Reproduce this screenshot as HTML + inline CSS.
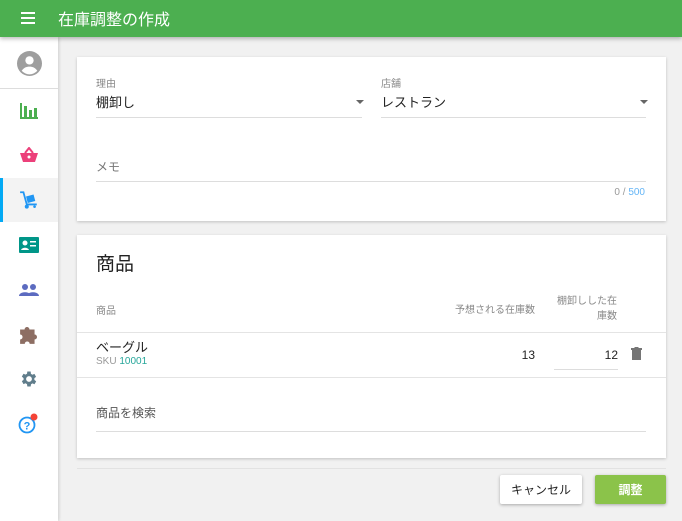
<!DOCTYPE html>
<html><head><meta charset="utf-8"><style>
*{box-sizing:border-box;margin:0;padding:0}
body{width:682px;height:521px;overflow:hidden;background:#f1f1f1;font-family:"Liberation Sans","Noto Sans CJK JP",sans-serif;position:relative;color:#222}
.top{position:absolute;left:0;top:0;width:682px;height:37px;background:#4caf50;box-shadow:0 2px 4px rgba(0,0,0,.25);z-index:3}
.top .t{position:absolute;left:58px;top:6px;color:#fff;font-size:16px}
.side{position:absolute;left:0;top:37px;width:58px;height:484px;background:#fff;box-shadow:1px 0 3px rgba(0,0,0,.15);z-index:2}
.side .it{position:absolute;left:0;width:58px;height:44px;display:flex;align-items:center;justify-content:center}
.card{position:absolute;left:77px;width:589px;background:#fff;box-shadow:0 1px 3px rgba(0,0,0,.2)}
.lbl{position:absolute;font-size:10px;color:#888}
.val{position:absolute;font-size:13px;color:#222}
.ln{position:absolute;height:1px;background:#ddd}
.arr{position:absolute;width:0;height:0;border-left:4px solid transparent;border-right:4px solid transparent;border-top:4px solid #666}
.btn{position:absolute;top:475px;height:29px;font-size:12px;display:flex;align-items:center;justify-content:center;box-shadow:0 1px 3px rgba(0,0,0,.3);border-radius:2px}
</style></head><body>
<div class="top">
<svg style="position:absolute;left:21px;top:12px" width="14" height="12"><rect y="0" width="14" height="2" fill="#fff"/><rect y="5" width="14" height="2" fill="#fff"/><rect y="10" width="14" height="2" fill="#fff"/></svg>
<div class="t">在庫調整の作成</div></div>
<div class="side">
<div class="it" style="top:3px;height:46px"><svg width="25" height="25" viewBox="0 0 24 24"><circle cx="12" cy="12" r="12" fill="#9e9e9e"/><circle cx="12" cy="9" r="4" fill="#fff"/><path d="M4.5 19c2-3 4.5-4 7.5-4s5.5 1 7.5 4a10 10 0 0 1-15 0z" fill="#fff"/></svg></div>
<div style="position:absolute;top:51px;left:0;width:58px;height:1px;background:#ddd"></div>
<div class="it" style="top:52px"><svg width="18" height="16"><rect x="0" y="0" width="2" height="16" fill="#4caf50"/><rect x="0" y="14" width="18" height="2" fill="#4caf50"/><rect x="4" y="3" width="3" height="11" fill="#4caf50"/><rect x="9" y="7" width="3" height="7" fill="#4caf50"/><rect x="14" y="5" width="3" height="9" fill="#4caf50"/></svg></div>
<div class="it" style="top:96px"><svg width="18" height="16" viewBox="0 0 18 16"><path d="M5 6L9 1l4 5" stroke="#ec407a" stroke-width="2" fill="none"/><path d="M0 6h18l-3 9H3z" fill="#ec407a"/><circle cx="9" cy="10" r="1.5" fill="#fff"/></svg></div>
<div class="it" style="top:141px;background:#f3f3f3"><div style="position:absolute;left:0;top:0;width:3px;height:44px;background:#03a9f4"></div><svg width="20" height="20" viewBox="0 0 18 18"><path d="M1 2h3l3 11h9" stroke="#2196f3" stroke-width="1.6" fill="none"/><rect x="7" y="5" width="7" height="6" fill="#2196f3" transform="rotate(-15 10 8)"/><circle cx="7" cy="15" r="1.8" fill="#2196f3"/><circle cx="14" cy="15" r="1.2" fill="#2196f3"/></svg></div>
<div class="it" style="top:186px"><svg width="20" height="16"><rect width="20" height="16" rx="1" fill="#009688"/><circle cx="6" cy="6" r="2.5" fill="#fff"/><path d="M2 13c1-3 7-3 8 0z" fill="#fff"/><rect x="11" y="4" width="6" height="1.5" fill="#fff"/><rect x="11" y="8" width="6" height="1.5" fill="#fff"/></svg></div>
<div class="it" style="top:231px"><svg width="20" height="12"><circle cx="6" cy="3" r="3" fill="#5c6bc0"/><circle cx="14" cy="3" r="3" fill="#5c6bc0"/><path d="M0 12c0-5 12-5 12 0zM8 12c0-5 12-5 12 0z" fill="#5c6bc0"/></svg></div>
<div class="it" style="top:276px"><svg width="20" height="20" viewBox="0 0 18 18"><path d="M1 4h4a2.2 2.2 0 1 1 4.4 0h4.6v4.6a2.2 2.2 0 1 1 0 4.4V17h-4.4a2.2 2.2 0 1 0-4.4 0H1v-4a2.2 2.2 0 1 0 0-4.4z" fill="#8d6e63"/></svg></div>
<div class="it" style="top:320px"><svg width="20" height="20" viewBox="0 0 24 24"><path fill="#607d8b" d="M19.4 13a7.5 7.5 0 0 0 0-2l2.1-1.6-2-3.5-2.5 1a7 7 0 0 0-1.7-1L15 3h-4l-.4 2.7a7 7 0 0 0-1.7 1l-2.5-1-2 3.5L6.5 11a7.5 7.5 0 0 0 0 2l-2.1 1.6 2 3.5 2.5-1a7 7 0 0 0 1.7 1L11 21h4l.4-2.7a7 7 0 0 0 1.7-1l2.5 1 2-3.5zM13 15.5a3.5 3.5 0 1 1 0-7 3.5 3.5 0 0 1 0 7z" transform="translate(-1 0)"/></svg></div>
<div class="it" style="top:364px"><svg width="22" height="22" viewBox="0 0 22 22"><circle cx="9" cy="13" r="7.5" stroke="#2196f3" stroke-width="1.8" fill="none"/><text x="9" y="17.5" font-size="11" font-weight="bold" fill="#2196f3" text-anchor="middle" font-family="Liberation Sans">?</text><circle cx="16" cy="5" r="3.5" fill="#f44336"/></svg></div>
</div>
<div class="card" style="top:57px;height:164px">
<div class="lbl" style="left:19px;top:18px">理由</div>
<div class="val" style="left:19px;top:35px">棚卸し</div>
<div class="arr" style="left:279px;top:43px"></div>
<div class="ln" style="left:19px;top:60px;width:266px"></div>
<div class="lbl" style="left:304px;top:18px">店舗</div>
<div class="val" style="left:304px;top:35px">レストラン</div>
<div class="arr" style="left:563px;top:43px"></div>
<div class="ln" style="left:304px;top:60px;width:265px"></div>
<div class="val" style="left:19px;top:101px;color:#777;font-size:12px">メモ</div>
<div class="ln" style="left:19px;top:124px;width:550px"></div>
<div style="position:absolute;right:21px;top:130px;font-size:10px;color:#999">0 / <span style="color:#64b5f6">500</span></div>
</div>
<div class="card" style="top:235px;height:223px">
<div style="position:absolute;left:19px;top:14px;font-size:19px">商品</div>
<div class="lbl" style="left:19px;top:67px">商品</div>
<div class="lbl" style="left:300px;top:66px;width:158px;text-align:right">予想される在庫数</div>
<div class="lbl" style="left:470px;top:59px;width:70px;text-align:right;line-height:15px">棚卸しした在<br>庫数</div>
<div class="ln" style="left:0;top:97px;width:589px;background:#e4e4e4"></div>
<div class="val" style="left:19px;top:102px">ベーグル</div>
<div style="position:absolute;left:19px;top:121px;font-size:10px;color:#999">SKU <span style="color:#26a69a">10001</span></div>
<div class="val" style="left:380px;top:113px;width:78px;text-align:right;font-size:12px">13</div>
<div class="val" style="left:476px;top:113px;width:65px;text-align:right;font-size:12px">12</div>
<div class="ln" style="left:477px;top:134px;width:64px"></div>
<svg style="position:absolute;left:554px;top:112px" width="11" height="13"><rect x="0" y="1" width="11" height="2" fill="#757575"/><rect x="3.5" y="0" width="4" height="2" fill="#757575"/><rect x="1" y="3" width="9" height="10" fill="#757575"/></svg>
<div class="ln" style="left:0;top:142px;width:589px;background:#e4e4e4"></div>
<div class="val" style="left:19px;top:169px;font-size:12px;color:#555">商品を検索</div>
<div class="ln" style="left:19px;top:196px;width:550px"></div>
</div>
<div class="ln" style="left:77px;top:468px;width:589px;background:#e2e2e2"></div>
<div class="btn" style="left:500px;width:82px;background:#fff;color:#222">キャンセル</div>
<div class="btn" style="left:595px;width:71px;background:#8bc34a;color:#fff;font-weight:bold">調整</div>
</body></html>
